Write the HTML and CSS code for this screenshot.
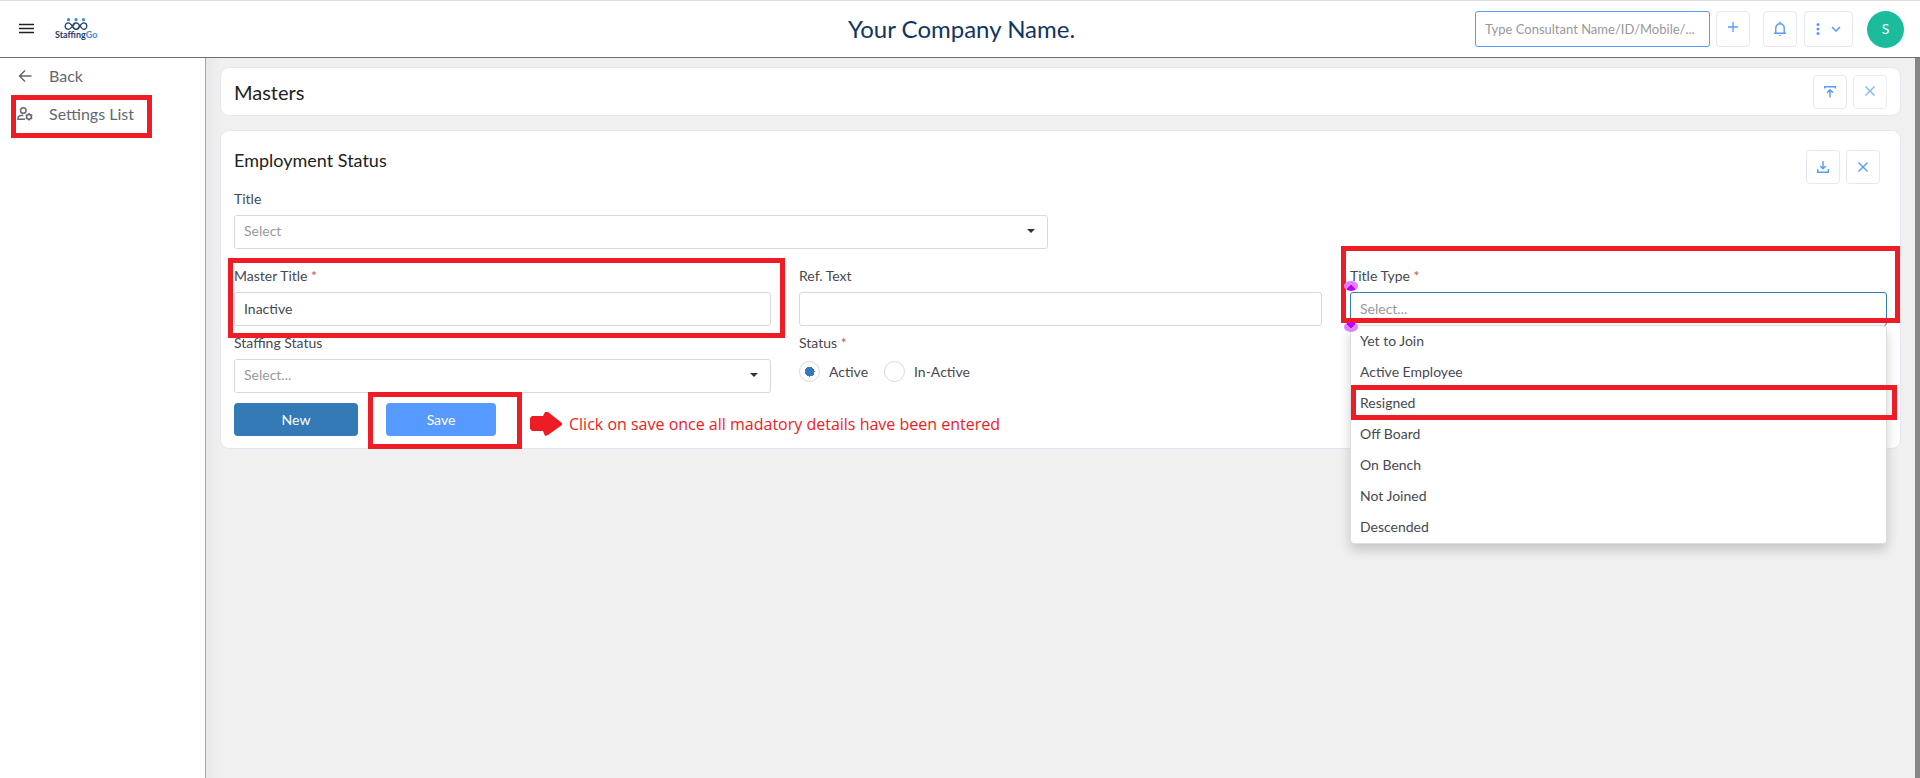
FILE: index.html
```html
<!DOCTYPE html>
<html lang="en">
  <head>
    <title>StaffingGo - Masters</title>
    <meta charset="UTF-8" />
    <meta name="viewport" content="width=device-width, initial-scale=1.0" />
    <link rel="stylesheet" href="styles.css">
  </head>

  <body>
    <header class="topbar">
      <div class="topbar-left">
        <button class="menu-button" aria-label="Menu">
          <svg width="16" height="12" viewBox="0 0 16 12"><path d="M0 1.5h15M0 5.5h15M0 9.5h15" stroke="#222" stroke-width="1.4" /></svg>
        </button>
        <a href="#" class="logo">
          <svg width="24" height="12" viewBox="0 0 24 12" fill="none">
            <g fill="#3d8bd4"><circle cx="4.5" cy="1.7" r="1.6" /><circle cx="12" cy="1.7" r="1.6" /><circle cx="19.5" cy="1.7" r="1.6" /></g>
            <path d="M4.5 4.8C7.5 4.8 9 11.3 12 11.3S15.3 9.500 15.3 8 13.800 4.800 12 4.800 7.500 11.300 4.500 11.300 1.200 9.500 1.200 8 2.500 4.800 4.500 4.800M12 4.800C10 4.800 8.700 6.500 8.700 8S10 11.300 12 11.300C15 11.300 16.500 4.800 19.500 4.800S22.800 6.500 22.800 8 21.500 11.300 19.500 11.300 15 4.800 12 4.800" stroke="#1f3c68" stroke-width="1.300" />
          </svg>
          <span class="logo-text">Staffing<span>Go</span></span>
        </a>
      </div>
      <div class="company">Your Company Name.</div>
      <div class="topbar-right">
        <input type="text" class="search" aria-label="Search consultant" placeholder="Type Consultant Name/ID/Mobile/..." />
        <button class="icon-button add" aria-label="Add">
          <svg width="12" height="16" viewBox="0 0 12 16"><path d="M6 1v10M1 6h10" stroke="#5699ff" stroke-width="1.3" /></svg>
        </button>
        <button class="icon-button bell" aria-label="Notifications">
          <svg width="14" height="16" viewBox="0 0 14 16" fill="none" stroke="#5699ff" stroke-width="1.4"><path d="M1 12.300h12M2.800 12V7a4.200 4.200 0 0 1 8.400 0v5M7 .8v2" /><path d="M5.500 14h3l-1.500 1z" fill="#5699ff" stroke="none" /></svg>
        </button>
        <button class="icon-button more" aria-label="More">
          <svg width="4" height="12" viewBox="0 0 4 12" fill="#5699ff"><circle cx="2" cy="1.600" r="1.500" /><circle cx="2" cy="6" r="1.500" /><circle cx="2" cy="10.400" r="1.500" /></svg>
          <svg width="10" height="6" viewBox="0 0 10 6" fill="none"><path d="M1 1l4 4 4-4" stroke="#5699ff" stroke-width="1.500" /></svg>
        </button>
        <button class="avatar">S</button>
      </div>
    </header>

    <div class="layout">
      <nav class="sidebar">
        <a href="#">
          <svg width="16" height="16" viewBox="0 0 16 16" fill="none"><path d="M14.500 8H3M8 2.500L2.500 8 8 13.500" stroke="#646770" stroke-width="1.500" /></svg>
          Back
        </a>
        <a href="#" class="marked">
          <svg width="16" height="16" viewBox="0 0 16 16" fill="none" stroke="#646770" stroke-width="1.500"><circle cx="6.300" cy="4.500" r="2.800" /><path d="M8 13.200H1V12c0-1.800 2.300-2.800 5.300-2.800" /><circle cx="12" cy="10.800" r="2.400" /><path d="M12 7v1.400M12 13.200v1.400M8.700 8.900l1.200.7M14.100 12l1.200.7M8.700 12.700l1.200-.7M14.100 9.600l1.200-.7" /></svg>
          Settings List
        </a>
      </nav>

      <main class="content">
        <section class="card page-head">
          <h1>Masters</h1>
          <div class="actions">
            <button class="icon-button" aria-label="Upload">
              <svg width="12" height="14" viewBox="0 0 12 14" fill="none" stroke="#5699ff" stroke-width="1.400"><path d="M.7 3.500V1.700h10.600v1.800M6 12.500V5M3 7.800l3-3 3 3" /></svg>
            </button>
            <button class="icon-button faded" aria-label="Close">
              <svg width="12" height="14" viewBox="0 0 12 14"><path d="M1.500 1.500l9 9M10.500 1.500l-9 9" stroke="#5699ff" stroke-width="1.400" /></svg>
            </button>
          </div>
        </section>

        <form class="card">
          <div class="form-head">
            <h2>Employment Status</h2>
            <div class="actions">
              <button type="button" class="icon-button" aria-label="Download">
                <svg width="12" height="12" viewBox="0 0 12 12" fill="none" stroke="#5699ff" stroke-width="1.400"><path d="M6 0v7.500M3.200 5L6 7.800 8.800 5M.7 8v3.200h10.600V8" /></svg>
              </button>
              <button type="button" class="icon-button" aria-label="Close">
                <svg width="12" height="12" viewBox="0 0 12 12"><path d="M1.500 1.500l9 9M10.500 1.500l-9 9" stroke="#5699ff" stroke-width="1.400" /></svg>
              </button>
            </div>
          </div>

          <div class="field title-field">
            <label for="title">Title</label>
            <div class="select"><select id="title"><option>Select</option></select></div>
          </div>

          <div class="form-grid">
            <div class="field marked">
              <label for="master-title">Master Title <span class="req">*</span></label>
              <input type="text" id="master-title" value="Inactive" />
            </div>
            <div class="field">
              <label for="ref-text">Ref. Text</label>
              <input type="text" id="ref-text" />
            </div>
            <div class="field title-type marked">
              <label for="title-type">Title Type <span class="req">*</span></label>
              <input type="text" id="title-type" class="focused" role="combobox" aria-expanded="true" aria-controls="type-list" placeholder="Select..." />
              <i class="handle handle-top"></i>
              <i class="handle handle-bottom"></i>
              <ul class="options" id="type-list" role="listbox">
                <li role="option">Yet to Join</li>
                <li role="option">Active Employee</li>
                <li role="option" class="marked">Resigned</li>
                <li role="option">Off Board</li>
                <li role="option">On Bench</li>
                <li role="option">Not Joined</li>
                <li role="option">Descended</li>
              </ul>
            </div>
            <div class="field">
              <label for="staffing-status">Staffing Status</label>
              <div class="select"><select id="staffing-status"><option>Select...</option></select></div>
            </div>
            <fieldset class="field">
              <legend>Status <span class="req">*</span></legend>
              <div class="radios">
                <label><input type="radio" name="status" checked />Active</label>
                <label><input type="radio" name="status" />In-Active</label>
              </div>
            </fieldset>
          </div>

          <div class="buttons">
            <button type="button" class="btn btn-new">New</button>
            <div class="save-wrap marked"><button type="button" class="btn btn-save">Save</button></div>
            <p class="note">
              <svg width="32" height="24" viewBox="0 0 32 24"><path d="M2 4h11l2-4h3l14 11v2L18 23l-3 1-2-5H2l-2-2V6z" fill="#ee1c24" /></svg>
              Click on save once all madatory details have been entered
            </p>
          </div>
        </form>
      </main>
    </div>
  </body>
</html>
```
FILE: styles.css
```css
* {
  box-sizing: border-box;
}

body {
  margin: 0;
  min-height: 100vh;
  display: flex;
  flex-direction: column;
  font-family: Lato, "Open Sans", sans-serif;
  font-size: 14px;
  line-height: 20px;
  color: #48484f;
  background: #f0f0f0;
}

h1,
h2,
p,
ul {
  margin: 0;
  padding: 0;
  font-weight: normal;
}

button,
input,
select {
  font: inherit;
  color: inherit;
}

button {
  padding: 0;
  cursor: pointer;
}

svg {
  display: block;
  flex: none;
}

/* Top bar */
.topbar {
  display: grid;
  grid-template-columns: 1fr auto 1fr;
  align-items: center;
  height: 58px;
  padding: 0 16px 0 19px;
  background: #fff;
  border-top: 1px solid #ddd;
  border-bottom: 1px solid #6c706c;
}

.topbar-left,
.topbar-right {
  display: flex;
  align-items: center;
}

.topbar-right {
  justify-content: flex-end;
}

.menu-button {
  border: none;
  background: none;
}

.logo {
  display: flex;
  flex-direction: column;
  align-items: center;
  margin-left: 20px;
  text-decoration: none;
}

.logo-text {
  font-size: 9px;
  line-height: 10px;
  font-weight: bold;
  color: #1f3c68;
}

.logo-text span {
  color: #3d8bd4;
}

.company {
  font-size: 24px;
  line-height: 32px;
  color: #12355f;
}

.search {
  width: 235px;
  height: 36px;
  padding: 0 9px;
  font-size: 13px;
  border: 1px solid #5699ff;
  border-radius: 3px;
}

::placeholder {
  color: #999;
  opacity: 1;
}

.icon-button {
  display: flex;
  align-items: center;
  justify-content: center;
  width: 34px;
  height: 34px;
  background: #fff;
  border: 1px solid #e6e8f0;
  border-radius: 4px;
}

.topbar .icon-button {
  height: 36px;
}

.add {
  margin-left: 6px;
}

.bell {
  margin-left: 13px;
}

.topbar .more {
  width: 49px;
  gap: 11px;
  margin-left: 7px;
}

.avatar {
  width: 37px;
  height: 37px;
  margin-left: 14px;
  border: none;
  border-radius: 50%;
  background: #1abc9c;
  color: #fff;
}

/* Page body */
.layout {
  flex: 1;
  display: flex;
  border-right: 5px solid #868686;
}

.sidebar {
  width: 206px;
  flex: none;
  background: #fff;
  border-right: 1px solid #a8a8a8;
}

.sidebar a {
  display: flex;
  align-items: center;
  gap: 16px;
  height: 38px;
  padding: 0 0 2px 17px;
  font-size: 16px;
  color: #646770;
  text-decoration: none;
}

.content {
  flex: 1;
  padding: 9px 14px;
  background: linear-gradient(90deg, #e8e8e8, #f0f0f0 16px);
}

.card {
  padding: 12px 13px;
  margin-bottom: 14px;
  background: #fff;
  border: 1px solid #e6e7ee;
  border-radius: 9px;
}

.page-head {
  display: flex;
  align-items: center;
  justify-content: space-between;
  padding: 7px 13px 6px;
}

h1 {
  font-size: 20px;
  line-height: 24px;
  color: #222;
}

h2 {
  font-size: 18px;
  color: #222;
}

.actions {
  display: flex;
  gap: 6px;
}

.faded {
  opacity: 0.75;
}

/* Form */
.form-head {
  display: flex;
  justify-content: space-between;
  margin: 7px 7px 5px 0;
}

.field {
  position: relative;
  display: flex;
  flex-direction: column;
  gap: 6px;
  min-width: 0;
  margin: 0;
  padding: 0;
  border: none;
}

.title-field {
  width: calc(50% - 13px);
  margin-bottom: 17px;
}

.form-grid {
  display: grid;
  grid-template-columns: 537fr 523fr 537fr;
  gap: 7px 28px;
}

.field > input,
.select select {
  display: block;
  width: 100%;
  height: 34px;
  padding: 0 9px 2px;
  background: #fff;
  border: 1px solid #d8d8dc;
  border-radius: 3px;
  outline: none;
}

.field > .focused {
  border-color: #337ab7;
}

.select {
  position: relative;
}

.select select {
  appearance: none;
  color: #999;
}

.select::after {
  content: "";
  position: absolute;
  right: 13px;
  top: 14px;
  border: 4px solid transparent;
  border-top-color: #333;
  border-bottom: none;
}

.req {
  color: #d9534f;
}

legend {
  padding: 0;
}

.radios {
  display: flex;
  gap: 16px;
  margin-top: 8px;
}

.radios label {
  display: flex;
  align-items: center;
  gap: 9px;
}

.radios input {
  appearance: none;
  width: 21px;
  height: 21px;
  margin: 0;
  border: 1px solid #d8d8dc;
  border-radius: 50%;
}

.radios input:checked {
  background: radial-gradient(circle, #337ab7 5px, #fff 5px);
}

.options {
  position: absolute;
  top: calc(100% - 1px);
  left: 0;
  right: 0;
  z-index: 2;
  list-style: none;
  background: #fff;
  border: 1px solid #ddd;
  border-radius: 4px;
  box-shadow: 0 6px 12px rgba(0, 0, 0, 0.18);
}

.options li {
  height: 31px;
  padding-left: 9px;
  line-height: 29px;
}

.buttons {
  display: flex;
  align-items: center;
  margin-top: 10px;
}

.btn {
  height: 33px;
  border: none;
  border-radius: 4px;
  color: #fff;
}

.btn-new {
  width: 124px;
  background: #337ab7;
}

.save-wrap {
  margin-left: 28px;
}

.btn-save {
  display: block;
  width: 110px;
  background: #5699ff;
}

.note {
  display: flex;
  gap: 7px;
  align-items: center;
  margin-left: 34px;
  padding-top: 8px;
  font-family: "Open Sans", sans-serif;
  font-size: 16px;
  color: #ee1c24;
}

/* Red outlines */
.marked {
  position: relative;
}

.marked::after {
  content: "";
  position: absolute;
  border: 5px solid #ee1c24;
  pointer-events: none;
}

.sidebar .marked::after {
  inset: -1px 53px -4px 11px;
}

.field.marked::after {
  inset: -8px -14px -12px -6px;
}

.title-type.marked::after {
  inset: -20px -13px 3px -9px;
}

.options .marked::after {
  inset: -3px -11px -1px 0;
}

.save-wrap.marked::after {
  inset: -11px -26px -13px -18px;
}

/* Selection handles on the open field */
.handle {
  position: absolute;
  left: -6px;
  z-index: 3;
  width: 14px;
  height: 10px;
  border-radius: 50%;
  background: radial-gradient(ellipse at 50% 100%, #c000ff 4px, #e07fff 4px);
}

.handle-top {
  top: 15px;
}

.handle-bottom {
  top: 56px;
  background: radial-gradient(ellipse at 50% 0, #c000ff 4px, #e07fff 4px);
}
```
